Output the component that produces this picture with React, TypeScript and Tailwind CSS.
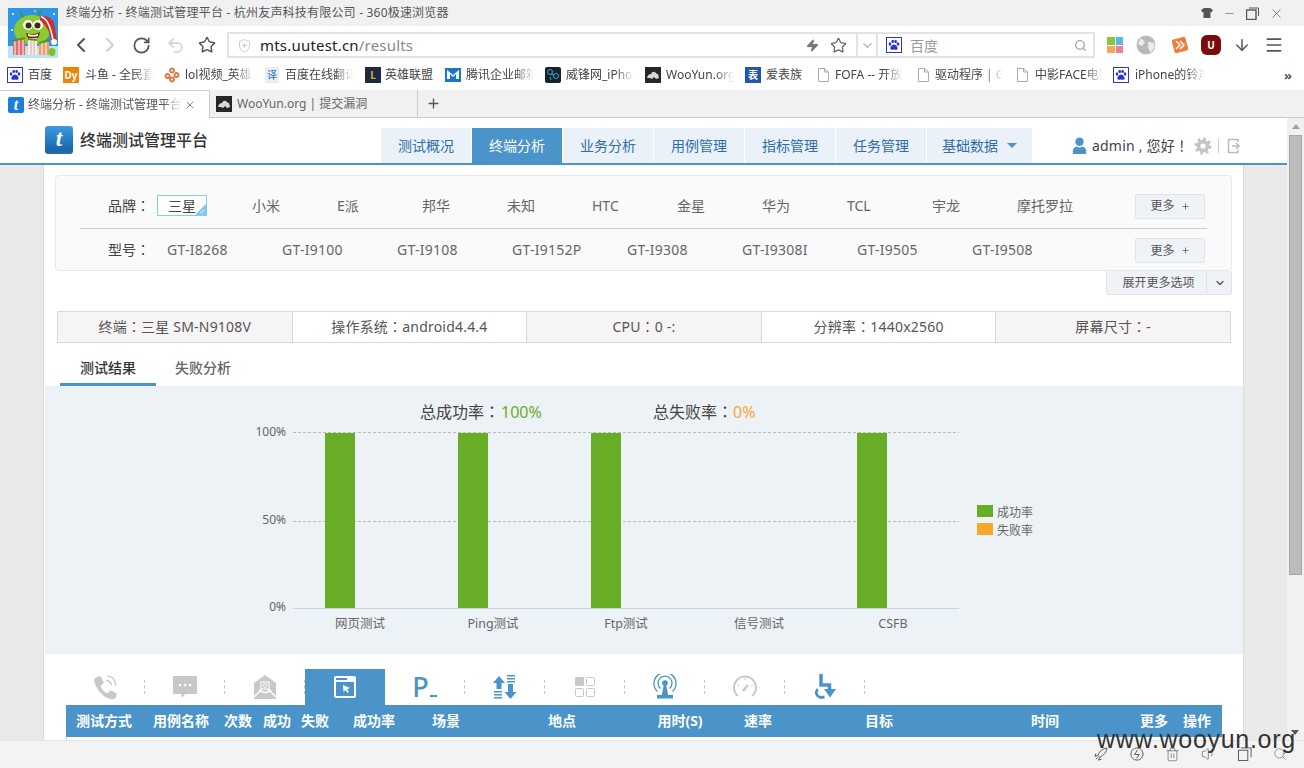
import type { ReactNode } from 'react'
import {
  ArrowDown,
  ChevronDown,
  ChevronLeft,
  ChevronRight,
  Menu,
  Minus,
  Plus,
  RotateCw,
  Search,
  ShieldPlus,
  Star,
  Trash2,
  Undo2,
  Volume1,
  X,
  Zap,
} from 'lucide-react'

const BLUE = '#4a94c9'

function Monster() {
  return (
    <svg viewBox="0 0 50 50" className="absolute left-[8px] top-[8px] h-[50px] w-[50px]">
      <rect width="50" height="50" fill="#2f95e6" />
      <rect y="38" width="50" height="12" fill="#bfe3f6" />
      <circle cx="5" cy="6" r="1" fill="#fff" />
      <circle cx="46" cy="6" r="1" fill="#fff" />
      <circle cx="4" cy="22" r="1" fill="#fff" />
      <circle cx="27" cy="3" r="0.800" fill="#fff" />
      <path d="M12 3l3 6M33 2l-3 6" stroke="#4f8f1c" strokeWidth="1.600" />
      <ellipse cx="24" cy="22" rx="18" ry="15" fill="#8ccb2e" />
      <path d="M32 9q10-3 14 6l3 17-6 1q-1-13-11-20z" fill="#d92b27" />
      <path d="M33 9q8 1 12 23" stroke="#fff" strokeWidth="1.600" fill="none" />
      <circle cx="46" cy="34" r="3" fill="#fff" />
      <circle cx="20" cy="17" r="5" fill="#fff" />
      <circle cx="30" cy="17" r="5" fill="#fff" />
      <circle cx="20.500" cy="17.500" r="3" fill="#3b2a1b" />
      <circle cx="29.500" cy="17.500" r="3" fill="#3b2a1b" />
      <path d="M18 25q7 3 14-1-1 8-7 8t-7-7z" fill="#7a2a1a" />
      <path d="M20 26q5 2 10 0v2q-5 1-10 0z" fill="#fff" />
      <rect x="5" y="32" width="12" height="15" fill="#e96a6a" />
      <path d="M7 32v15M11 32v15M15 32v15" stroke="#fbe3e3" strokeWidth="1.200" />
      <rect x="20" y="30" width="9" height="17" fill="#f3efe4" />
      <path d="M23 30v17M26 30v17" stroke="#e7a79f" strokeWidth="1" />
      <rect x="31" y="34" width="10" height="13" fill="#e9a06f" />
      <path d="M34 34v13M38 34v13" stroke="#fbe3d0" strokeWidth="1.200" />
      <path d="M4 33l13-3M20 31l9 1M31 35l11-3" stroke="#5b8f2c" strokeWidth="2" />
      <ellipse cx="44" cy="44" rx="3.500" ry="4" fill="#7cc02a" />
    </svg>
  )
}

function Paw({ className = 'h-[16px] w-[16px]' }: { className?: string }) {
  return (
    <svg viewBox="0 0 16 16" className={className}>
      <rect x="0.500" y="0.500" width="15" height="15" fill="#fff" stroke="#2a32d8" />
      <g fill="#2a32d8">
        <ellipse cx="4" cy="7" rx="1.300" ry="1.700" />
        <ellipse cx="6.700" cy="4.400" rx="1.300" ry="1.700" />
        <ellipse cx="9.600" cy="4.400" rx="1.300" ry="1.700" />
        <ellipse cx="12" cy="7" rx="1.300" ry="1.700" />
        <path d="M8 7.500c2 0 4.300 3 3.500 4.500-.7 1.200-2.300.4-3.500.4s-2.800.8-3.500-.4C3.700 10.500 6 7.500 8 7.500z" />
      </g>
    </svg>
  )
}

function DocIcon() {
  return (
    <svg viewBox="0 0 13 16" className="h-[16px] w-[13px]">
      <path d="M1.500 1.500h6l4 3.500v9.500h-10z M7.500 1.500v3.500h4" fill="#fff" stroke="#aaa" />
    </svg>
  )
}

function Square({ bg, children }: { bg: string; children: ReactNode }) {
  return (
    <span
      className="flex h-[16px] w-[16px] items-center justify-center text-[10px] font-bold leading-none text-white"
      style={{ backgroundColor: bg }}
    >
      {children}
    </span>
  )
}

function LolIcon() {
  return (
    <svg viewBox="0 0 16 16" className="h-[16px] w-[16px]">
      <g fill="none" stroke="#e2743c" strokeWidth="1.800">
        <circle cx="8" cy="3.500" r="2" />
        <circle cx="3.500" cy="9" r="2" />
        <circle cx="12.500" cy="8" r="2" />
        <circle cx="8" cy="12.500" r="2" />
      </g>
    </svg>
  )
}

function MailIcon() {
  return (
    <svg viewBox="0 0 16 16" className="h-[16px] w-[16px]">
      <rect width="16" height="14" y="1" fill="#1b78c8" />
      <path d="M2 3l6 5 6-5v9h-3V7L8 10 5 7v5H2z" fill="#fff" />
    </svg>
  )
}

function WeiIcon() {
  return (
    <svg viewBox="0 0 16 16" className="h-[16px] w-[16px]">
      <rect width="16" height="16" rx="2" fill="#16232b" />
      <circle cx="5" cy="5" r="2.500" fill="none" stroke="#30a7e0" />
      <circle cx="11" cy="9" r="2.500" fill="none" stroke="#30a7e0" />
      <path d="M6 7l3 1M5 10l1 3" stroke="#30a7e0" />
    </svg>
  )
}

function WooIcon() {
  return (
    <svg viewBox="0 0 16 16" className="h-[16px] w-[16px]">
      <rect width="16" height="16" fill="#26262a" />
      <path d="M2 11q1-4 4-4 1-3 4-2 1 2 3 2l1 4-3 1-2-2-2 2-2-1z" fill="#d8d8d8" />
    </svg>
  )
}

const bookmarks = [
  { icon: <Paw />, label: '百度', w: 'w-[56px]', slot: 'w-[21px]', tw: 'w-[28px]', fade: false },
  { icon: <Square bg="#f08300">Dy</Square>, label: '斗鱼 - 全民直播', w: 'w-[101px]', slot: 'w-[22px]', tw: 'w-[68px]', fade: true },
  { icon: <LolIcon />, label: 'lol视频_英雄联盟', w: 'w-[101px]', slot: 'w-[21px]', tw: 'w-[68px]', fade: true },
  { icon: <span className="flex h-[16px] w-[14px] items-center justify-center bg-[#e8eef5] text-[10px] leading-none text-[#2a6fb5]">译</span>, label: '百度在线翻译', w: 'w-[100px]', slot: 'w-[20px]', tw: 'w-[68px]', fade: true },
  { icon: <Square bg="#1d2a3f"><span className="text-[#d9a93f]">L</span></Square>, label: '英雄联盟', w: 'w-[80px]', slot: 'w-[20px]', tw: 'w-[56px]', fade: false },
  { icon: <MailIcon />, label: '腾讯企业邮箱', w: 'w-[100px]', slot: 'w-[21px]', tw: 'w-[68px]', fade: true },
  { icon: <WeiIcon />, label: '威锋网_iPhone', w: 'w-[100px]', slot: 'w-[21px]', tw: 'w-[68px]', fade: true },
  { icon: <WooIcon />, label: 'WooYun.org', w: 'w-[100px]', slot: 'w-[21px]', tw: 'w-[68px]', fade: true },
  { icon: <Square bg="#1e56b0">表</Square>, label: '爱表族', w: 'w-[72px]', slot: 'w-[21px]', tw: 'w-[42px]', fade: false },
  { icon: <DocIcon />, label: 'FOFA -- 开放平台', w: 'w-[100px]', slot: 'w-[18px]', tw: 'w-[68px]', fade: true },
  { icon: <DocIcon />, label: '驱动程序 | Github', w: 'w-[99px]', slot: 'w-[18px]', tw: 'w-[68px]', fade: true },
  { icon: <DocIcon />, label: '中影FACE电影', w: 'w-[97px]', slot: 'w-[19px]', tw: 'w-[68px]', fade: true },
  { icon: <Paw />, label: 'iPhone的铃声', w: 'w-[150px]', slot: 'w-[22px]', tw: 'w-[70px]', fade: true },
]

function TitleBar() {
  return (
    <div className="flex h-[26px] shrink-0 items-center justify-between bg-[#f1f1f1] pl-[66px] pr-[20px] text-[12px] tracking-[0.2px] text-[#555]">
      <span>终端分析 - 终端测试管理平台 - 杭州友声科技有限公司 - 360极速浏览器</span>
      <div className="flex items-center gap-[10px] text-[#666]">
        <svg viewBox="0 0 12 12" className="h-[12px] w-[12px]">
          <path d="M3 1h6l3 2-1.500 2.500L9.500 5v6h-7V5l-1 .5L0 3z" fill="#555" />
        </svg>
        <Minus size={13} strokeWidth={1.200} />
        <svg viewBox="0 0 13 13" className="h-[13px] w-[13px]" fill="none" stroke="#555">
          <rect x="0.500" y="3" width="9.500" height="9.500" strokeWidth="1.400" />
          <path d="M3 1h9.500v8" />
        </svg>
        <X size={15} strokeWidth={1.200} />
      </div>
    </div>
  )
}

function Toolbar() {
  return (
    <div className="flex h-[34px] shrink-0 items-center bg-white pl-[69px] pt-[4px] text-[#555]">
      <ChevronLeft size={24} strokeWidth={2} className="shrink-0" />
      <ChevronRight size={24} strokeWidth={2} className="ml-[5px] shrink-0 text-[#d0d0d0]" />
      <RotateCw size={19} strokeWidth={2.200} className="ml-[10px] shrink-0" />
      <Undo2 size={19} strokeWidth={2} className="ml-[15px] shrink-0 text-[#d4d4d4]" />
      <Star size={18} strokeWidth={2} className="ml-[13px] shrink-0" />
      <div className="ml-[11px] flex h-[26px] w-[868px] shrink-0 items-center border-2 border-[#e3e3e3]">
        <ShieldPlus size={15} strokeWidth={1.200} className="ml-[8px] shrink-0 text-[#bbb]" />
        <span className="ml-[8px] flex-1 whitespace-nowrap text-[15px] leading-none tracking-[0.2px] text-[#222]">
          mts.uutest.cn<span className="text-[#888]">/results</span>
        </span>
        <Zap size={13} className="shrink-0 text-[#777]" fill="#777" />
        <Star size={17} strokeWidth={1.800} className="ml-[11px] shrink-0 text-[#666]" />
        <div className="ml-[9px] flex h-full w-[22px] shrink-0 items-center justify-center border-x-2 border-[#e3e3e3]">
          <ChevronDown size={15} className="text-[#aaa]" />
        </div>
        <Paw className="ml-[8px] h-[16px] w-[16px] shrink-0" />
        <span className="ml-[8px] w-[164px] shrink-0 whitespace-nowrap text-[14px] text-[#999]">百度</span>
        <Search size={13} strokeWidth={2.500} className="shrink-0 text-[#aaa]" />
        <span className="w-[6px] shrink-0" />
      </div>
      <div className="ml-[12px] grid h-[16px] w-[16px] shrink-0 grid-cols-2 gap-[1px]">
        <span className="bg-[#8ac53f]" />
        <span className="bg-[#5ab4ef]" />
        <span className="bg-[#f5a65b]" />
        <span className="bg-[#f27f8a]" />
      </div>
      <svg viewBox="0 0 18 18" className="ml-[13px] h-[20px] w-[20px] shrink-0">
        <circle cx="9" cy="9" r="8.500" fill="#b9b9b9" />
        <path d="M4 3q3 1 4 4l-3 3-3-2zM11 6l5 1 1 4-4 5-2-4z" fill="#ececec" />
      </svg>
      <svg viewBox="0 0 18 18" className="ml-[15px] h-[18px] w-[18px] shrink-0">
        <rect x="2" y="2" width="14" height="14" rx="2" fill="#f47a3c" transform="rotate(-15 9 9)" />
        <path d="M5 5l4 4-4 4M9 5l4 4-4 4" stroke="#fff" strokeWidth="1.500" fill="none" />
      </svg>
      <span className="ml-[12px] flex h-[20px] w-[20px] shrink-0 items-center justify-center rounded-[6px] bg-[#7c0a0a] text-[10px] font-bold text-white">U</span>
      <ArrowDown size={18} strokeWidth={2} className="ml-[12px] shrink-0" />
      <Menu size={20} strokeWidth={2} className="ml-[13px] shrink-0" />
    </div>
  )
}

function BookmarkBar() {
  return (
    <div className="relative flex h-[30px] shrink-0 items-center bg-white pl-[7px] text-[12px] text-[#444]">
      {bookmarks.map((b) => (
        <div key={b.label} className={`flex shrink-0 items-center ${b.w}`}>
          <span className={`flex shrink-0 ${b.slot}`}>{b.icon}</span>
          <span
            className={`overflow-hidden whitespace-nowrap ${b.tw} ${
              b.fade ? '[mask-image:linear-gradient(to_right,black_72%,transparent)]' : ''
            }`}
          >
            {b.label}
          </span>
        </div>
      ))}
      <span className="absolute left-[1284px] top-[6px] text-[13px] font-bold text-[#555]">»</span>
    </div>
  )
}

function LogoT({ size = 'small' }: { size?: 'small' | 'large' }) {
  if (size === 'large') {
    return (
      <span className="flex h-[28px] w-[28px] items-center justify-center rounded-[3px] border-b-[3px] border-[#2b6a9f] bg-gradient-to-b from-[#3e9be0] to-[#1665ac] font-['Liberation_Serif',serif] text-[23px] font-bold italic leading-none text-white">
        t
      </span>
    )
  }
  return (
    <span className="flex h-[16px] w-[16px] items-center justify-center rounded-[2px] bg-[#1a7fdb] font-['Liberation_Serif',serif] text-[16px] font-bold italic leading-none text-white">
      t
    </span>
  )
}

function TabStrip() {
  return (
    <div className="flex h-[28px] shrink-0 items-stretch border-b border-[#ccc] bg-[#f1f1f1] text-[12px] text-[#555]">
      <div className="z-10 mb-[-1px] flex w-[210px] items-center border-r border-t border-[#ccc] bg-white pl-[8px]">
        <LogoT />
        <span className="ml-[4px] w-[154px] overflow-hidden whitespace-nowrap [mask-image:linear-gradient(to_right,black_88%,transparent)]">
          终端分析 - 终端测试管理平台 - 杭州
        </span>
        <X size={12} className="ml-[2px] text-[#888]" />
      </div>
      <div className="flex w-[208px] items-center border-r border-[#ccc] pl-[6px]">
        <WooIcon />
        <span className="ml-[5px] text-[#666]">WooYun.org | 提交漏洞</span>
      </div>
      <div className="flex w-[30px] items-center justify-center">
        <Plus size={15} strokeWidth={2.200} className="text-[#555]" />
      </div>
    </div>
  )
}

const navItems = ['测试概况', '终端分析', '业务分析', '用例管理', '指标管理', '任务管理']

function Header() {
  return (
    <div className="flex h-[47px] shrink-0 items-end border-b-2 border-[#4a94c9] bg-white pl-[45px]">
      <div className="mb-[9px] flex w-[336px] items-center">
        <LogoT size="large" />
        <span className="ml-[7px] text-[16px] font-medium text-[#333]">终端测试管理平台</span>
      </div>
      <div className="flex h-[35px] gap-[1px] text-[14px]">
        {navItems.map((n) => (
          <div
            key={n}
            className={`flex w-[90px] items-center justify-center ${
              n === '终端分析' ? 'bg-[#4a94c9] text-white' : 'bg-[#eaf1f8] text-[#2f6ea8]'
            }`}
          >
            {n}
          </div>
        ))}
        <div className="flex w-[105px] items-center justify-center gap-[9px] bg-[#eaf1f8] text-[#2f6ea8]">
          基础数据
          <span className="h-0 w-0 border-x-[5px] border-t-[5px] border-x-transparent border-t-[#4a94c9]" />
        </div>
      </div>
      <div className="mb-[7px] ml-[40px] flex items-center text-[14px] tracking-[0.2px] text-[#444]">
        <svg viewBox="0 0 16 18" className="h-[17px] w-[15px]" fill={BLUE}>
          <circle cx="8" cy="5" r="4.500" />
          <path d="M1 18q-1-7 4-8 3 2 6 0 5 1 4 8z" />
        </svg>
        <span className="ml-[5px] whitespace-nowrap">
          admin , 您好<span className="font-['Noto_Sans_CJK_TC']">！</span>
        </span>
        <svg viewBox="0 0 24 24" className="ml-[5px] h-[18px] w-[18px]" fill="none" stroke="#c4c4c4">
          <circle cx="12" cy="12" r="6" strokeWidth="5" />
          <circle cx="12" cy="12" r="9.500" strokeWidth="4" strokeDasharray="3.500 3.960" />
        </svg>
        <span className="ml-[6px] h-[14px] w-px bg-[#ccc]" />
        <svg viewBox="0 0 14 16" className="ml-[8px] h-[16px] w-[14px]" fill="none" stroke="#bbb" strokeWidth="1.500">
          <path d="M11 4V1.500H1.500v13H11V12M5 8h7M9 5l3 3-3 3" />
        </svg>
      </div>
    </div>
  )
}

const brands = ['小米', 'E派', '邦华', '未知', 'HTC', '金星', '华为', 'TCL', '宇龙', '摩托罗拉']
const models = ['GT-I8268', 'GT-I9100', 'GT-I9108', 'GT-I9152P', 'GT-I9308', 'GT-I9308I', 'GT-I9505', 'GT-I9508']

function Colon() {
  return <span className="font-['Noto_Sans_CJK_TC']">：</span>
}

function MoreButton({ className }: { className: string }) {
  return (
    <button className={`flex h-[25px] w-[70px] shrink-0 items-center justify-center gap-[6px] rounded-[2px] border border-[#dfe4ea] bg-[#eff3f7] text-[12px] text-[#555] ${className}`}>
      更多 <Plus size={9} strokeWidth={2} />
    </button>
  )
}

function FilterCard() {
  return (
    <div className="mx-[11px] mt-[10px] h-[96px] rounded-[4px] border border-[#e8e8e8] bg-[#fafafa] pl-[24px] text-[14px] text-[#666]">
      <div className="flex h-[53px] w-[1127px] items-center border-b border-[#ccc] pt-[7px]">
        <span className="w-[77px] shrink-0 whitespace-nowrap pl-[28px] text-[#444]">品牌<Colon /></span>
        <div className="relative flex h-[21px] w-[50px] shrink-0 items-center justify-center border border-[#89cbee] bg-white text-[#444]">
          三星
          <span className="absolute bottom-0 right-0 h-0 w-0 border-b-[11px] border-l-[11px] border-b-[#7cc6ef] border-l-transparent" />
          <svg viewBox="0 0 7 6" className="absolute bottom-[1px] right-[1px] h-[5px] w-[6px]" fill="none" stroke="#fff">
            <path d="M1 3l2 2 3-4" />
          </svg>
        </div>
        <div className="ml-[45px] flex w-[883px] shrink-0">
          {brands.map((b) => (
            <span key={b} className="w-[85px] shrink-0">
              {b}
            </span>
          ))}
        </div>
        <MoreButton className="mt-[1px]" />
      </div>
      <div className="flex h-[40px] w-[1127px] items-center">
        <span className="w-[87px] shrink-0 whitespace-nowrap pl-[28px] text-[#444]">型号<Colon /></span>
        <div className="flex w-[968px] shrink-0 tracking-[0.25px]">
          {models.map((m) => (
            <span key={m} className="w-[115px] shrink-0">
              {m}
            </span>
          ))}
        </div>
        <MoreButton className="mt-[3px]" />
      </div>
    </div>
  )
}

function ExpandButton() {
  return (
    <div className="mr-[11px] flex justify-end">
      <div className="flex h-[24px] w-[126px] items-center rounded-b-[3px] border border-t-0 border-[#dfe4ea] bg-[#eff3f7] text-[12px] text-[#555]">
        <span className="w-[100px] border-r border-[#dfe4ea] pl-[4px] text-center leading-[23px]">展开更多选项</span>
        <ChevronDown size={12} strokeWidth={2.500} className="ml-[7px]" />
      </div>
    </div>
  )
}

const infoCells = [
  ['终端', '三星 SM-N9108V'],
  ['操作系统', 'android4.4.4'],
  ['CPU', '0 -:'],
  ['分辨率', '1440x2560'],
  ['屏幕尺寸', '-'],
]

function InfoTable() {
  return (
    <div className="mx-[13px] mt-[16px] flex h-[32px] w-[1174px] border border-[#d8d8d8] text-[14px] text-[#555]">
      {infoCells.map(([k, v], i) => (
        <div
          key={k}
          className={`flex flex-1 items-center justify-center border-r border-[#d8d8d8] pb-[2px] tracking-[0.2px] last:border-r-0 ${
            i % 2 === 0 ? 'bg-[#f6f4f4]' : 'bg-white'
          }`}
        >
          <span className="whitespace-nowrap">
            {k}
            <Colon />
            {v}
          </span>
        </div>
      ))}
    </div>
  )
}

function ResultTabs() {
  return (
    <div className="ml-[16px] mt-[7px] flex h-[36px] text-[14px] font-medium">
      <div className="flex w-[96px] items-center justify-center border-b-[3px] border-[#4a94c9] pt-[1px] text-[#333]">测试结果</div>
      <div className="ml-[19px] flex items-center pb-[2px] text-[#666]">失败分析</div>
    </div>
  )
}

const bars = [
  { x: 280, label: '网页测试', cx: 315, on: true },
  { x: 413, label: 'Ping测试', cx: 448, on: true },
  { x: 546, label: 'Ftp测试', cx: 581, on: true },
  { x: 679, label: '信号测试', cx: 714, on: false },
  { x: 812, label: 'CSFB', cx: 848, on: true },
]

function Chart() {
  // coordinates are relative to the panel, which starts at x=45 y=386
  return (
    <div className="ml-[1px] h-[268px] w-[1198px] bg-[#edf2f6]">
      <svg width="1198" height="268" className="block">
        <text x="375" y="32" fontSize="16" fill="#444">
          总成功率<tspan fontFamily="Noto Sans CJK TC">：</tspan>
        </text>
        <text x="456" y="32" fontSize="16" fill="#6aae27">100%</text>
        <text x="608" y="32" fontSize="16" fill="#444">
          总失败率<tspan fontFamily="Noto Sans CJK TC">：</tspan>
        </text>
        <text x="688" y="32" fontSize="16" fill="#f5a733">0%</text>
        <line x1="248" x2="914" y1="46.500" y2="46.500" stroke="#bbb" strokeDasharray="3 2" />
        <line x1="248" x2="914" y1="135.500" y2="135.500" stroke="#bbb" strokeDasharray="3 2" />
        <line x1="248" x2="914" y1="222.500" y2="222.500" stroke="#c9d3e0" />
        <text x="241" y="50" textAnchor="end" fontSize="12" fill="#666">100%</text>
        <text x="241" y="138" textAnchor="end" fontSize="12" fill="#666">50%</text>
        <text x="241" y="225" textAnchor="end" fontSize="12" fill="#666">0%</text>
        {bars.map((b) =>
          b.on ? <rect key={b.label} x={b.x} y="47" width="30" height="175" fill="#68ad26" /> : null,
        )}
        {bars.map((b) => (
          <text key={b.label} x={b.cx} y="242" textAnchor="middle" fontSize="12.500" fill="#666">
            {b.label}
          </text>
        ))}
        <rect x="932" y="119" width="16" height="12" fill="#68ad26" />
        <rect x="932" y="137" width="16" height="12" fill="#f9a72b" />
        <text x="952" y="131" fontSize="12" fill="#666">成功率</text>
        <text x="952" y="149" fontSize="12" fill="#666">失败率</text>
      </svg>
    </div>
  )
}

function FeatureIcon({ name }: { name: string }) {
  const gray = '#c8c8c8'
  switch (name) {
    case 'phone':
      return (
        <svg viewBox="0 0 24 24" className="h-[26px] w-[26px]">
          <path d="M4 3l4-1 3 6-3 3q2 5 6 7l3-3 6 3-1 4q-2 2-5 1Q11 22 6 15 2 9 2 6q0-2 2-3z" fill={gray} />
          <path d="M13 6q4 0 5 4.500M14 2q7 0 8 8.500" fill="none" stroke={gray} strokeWidth="1.300" />
        </svg>
      )
    case 'msg':
      return (
        <svg viewBox="0 0 26 24" className="h-[24px] w-[26px]">
          <path d="M1 1h24v18H13l-3 4-1-4H1z" fill={gray} />
          <circle cx="8" cy="10" r="1.300" fill="#fff" />
          <circle cx="13" cy="10" r="1.300" fill="#fff" />
          <circle cx="18" cy="10" r="1.300" fill="#fff" />
        </svg>
      )
    case 'mail':
      return (
        <svg viewBox="0 0 24 26" className="h-[26px] w-[24px]">
          <path d="M12 1l11 8v16H1V9z" fill={gray} />
          <path d="M1 23l8-8M23 23l-8-8M6 16q6 5 12 0" stroke="#fff" strokeWidth="1.500" fill="none" />
          <rect x="8" y="8" width="8" height="7" fill="none" stroke="#fff" />
          <circle cx="12" cy="11.500" r="1.800" fill="none" stroke="#fff" />
        </svg>
      )
    case 'web':
      return (
        <svg viewBox="0 0 22 22" className="h-[22px] w-[22px]">
          <rect width="22" height="22" rx="2" fill="#fff" />
          <rect x="2" y="6" width="18" height="14" fill="#4a94c9" />
          <rect x="2" y="2" width="11" height="2" fill="#4a94c9" />
          <path d="M9 9l7 3-3 1 2 3-1.500 1-2-3-2 2z" fill="#fff" />
        </svg>
      )
    case 'p':
      return (
        <span className="flex items-end font-['Noto_Sans',sans-serif] text-[27px] font-medium leading-[26px] text-[#4a94c9]">
          P<span className="mb-[3px] ml-[1px] h-[2px] w-[7px] bg-[#4a94c9]" />
        </span>
      )
    case 'arrows':
      return (
        <svg viewBox="0 0 24 24" className="h-[24px] w-[24px]" fill={BLUE}>
          <path d="M6 1l6 7H8.500v6h-5V8H0zM17.500 24l-6-7H15V9h5v8h3.500z" />
          <path d="M1 16h8v1.500H1zM1 19h8v1.500H1zM1 22h8v1.500H1zM14 0h8v1.500h-8zM14 3h8v1.500h-8zM14 6h8v1.500h-8z" />
        </svg>
      )
    case 'grid':
      return (
        <svg viewBox="0 0 20 20" className="h-[20px] w-[20px]">
          <rect x="0" y="0" width="9" height="9" rx="1" fill={gray} />
          <rect x="11.500" y=".5" width="8" height="8" rx="1" fill="none" stroke={gray} />
          <rect x=".5" y="11.500" width="8" height="8" rx="1" fill="none" stroke={gray} />
          <rect x="11.500" y="11.500" width="8" height="8" rx="1" fill="none" stroke={gray} />
        </svg>
      )
    case 'antenna':
      return (
        <svg viewBox="0 0 24 26" className="h-[26px] w-[24px]" fill="none" stroke={BLUE} strokeWidth="1.300">
          <circle cx="12" cy="9" r="2.800" fill={BLUE} stroke="none" />
          <path d="M7.500 14.500a7 7 0 1 1 9 0" />
          <path d="M4.500 17.500a11 11 0 1 1 15 0" />
          <path d="M10.800 11h2.400l2 10H20v3.500H4V21h4.800z" fill={BLUE} stroke="none" />
        </svg>
      )
    case 'gauge':
      return (
        <svg viewBox="0 0 24 24" className="h-[24px] w-[24px]" fill="none" stroke={gray} strokeWidth="2">
          <path d="M5 21a11 11 0 1 1 14 0" />
          <path d="M10 16l5-6" strokeWidth="2.500" />
          <path d="M12 3v2M4 10l2 1M20 10l-2 1" strokeWidth="1" />
        </svg>
      )
    default:
      return (
        <svg viewBox="0 0 24 26" className="h-[26px] w-[24px]" fill="none" stroke={BLUE} strokeWidth="3.500">
          <path d="M8 0v11h8.500v6" />
          <path d="M11 15h12l-6 8.500z" fill={BLUE} stroke="none" />
          <path d="M4.500 15q-3.500 6 3 8.500l4-.5" strokeWidth="2.800" />
        </svg>
      )
  }
}

const features = ['phone', 'msg', 'mail', 'web', 'p', 'arrows', 'grid', 'antenna', 'gauge', 'csfb']

function FeatureRow() {
  return (
    <div className="ml-[21px] mt-[15px] flex h-[36px] items-stretch">
      {features.map((f) =>
        f === 'web' ? (
          <div key={f} className="flex w-[80px] items-center justify-center bg-[#4a94c9]">
            <FeatureIcon name={f} />
          </div>
        ) : (
          <div key={f} className="flex w-[80px] items-center justify-center">
            <div className="flex flex-1 justify-center">
              <FeatureIcon name={f} />
            </div>
            <span className="h-[14px] border-r border-dashed border-[#c4c4c4]" />
          </div>
        ),
      )}
    </div>
  )
}

const columns = [
  { t: '测试方式', w: 'w-[76px]' },
  { t: '用例名称', w: 'w-[78px]' },
  { t: '次数', w: 'w-[36px]' },
  { t: '成功', w: 'w-[42px]' },
  { t: '失败', w: 'w-[34px]' },
  { t: '成功率', w: 'w-[84px]' },
  { t: '场景', w: 'w-[60px]' },
  { t: '地点', w: 'w-[172px]' },
  { t: '用时(S)', w: 'w-[64px]' },
  { t: '速率', w: 'w-[92px]' },
  { t: '目标', w: 'w-[150px]' },
  { t: '时间', w: 'w-[182px]' },
  { t: '更多', w: 'w-[36px]' },
  { t: '操作', w: 'w-[50px]' },
]

function ResultTable() {
  return (
    <div className="ml-[22px] w-[1156px]">
      <div className="flex h-[32px] items-center bg-[#4a94c9] pb-[2px] text-[14px] font-bold text-white">
        {columns.map((c) => (
          <span key={c.t} className={`shrink-0 whitespace-nowrap text-center ${c.w}`}>
            {c.t}
          </span>
        ))}
      </div>
      <div className="h-[3px] border-l border-[#ddd]" />
    </div>
  )
}

function Scrollbar() {
  return (
    <div className="relative h-full w-[17px] shrink-0 bg-[#f1f1f1]">
      <span className="absolute left-[5px] top-[6px] h-0 w-0 border-x-[4px] border-b-[5px] border-x-transparent border-b-[#a0a0a0]" />
      <div className="absolute left-[2px] top-[17px] h-[440px] w-[13px] border border-[#a8a8a8] bg-[#bcbcbc]" />
    </div>
  )
}

function StatusBar() {
  return (
    <div className="relative h-[28px] shrink-0 border-t border-[#e6e6e6] bg-[#f3f3f3]">
      <span className="absolute left-[1291px] top-[-11px] h-0 w-0 border-x-[4px] border-t-[5px] border-x-transparent border-t-[#555]" />
      <div className="absolute left-[1093px] top-[5px] flex items-center gap-[21px] text-[#555]">
        <svg viewBox="0 0 16 16" className="h-[15px] w-[15px]" fill="none" stroke="#555">
          <path d="M15 1q-7 1-10 8l2 2q7-3 8-10zM5 9l-3 1 1-3M7 11l-1 3 3-1M3 13l2-2" />
        </svg>
        <svg viewBox="0 0 16 16" className="h-[15px] w-[15px]" fill="none" stroke="#555">
          <circle cx="8.500" cy="7.500" r="6.500" />
          <path d="M9 3L6 8h5L8 12" />
        </svg>
        <Trash2 size={15} strokeWidth={1} />
        <Volume1 size={16} strokeWidth={1} />
        <svg viewBox="0 0 15 15" className="h-[14px] w-[14px]" fill="none" stroke="#555">
          <rect x="0.500" y="3.500" width="10" height="11" />
          <path d="M3 1h11v10" />
        </svg>
        <Search size={14} strokeWidth={1} />
      </div>
    </div>
  )
}

export default function App() {
  return (
    <div className="relative flex h-screen w-screen flex-col overflow-hidden bg-white font-['Noto_Sans','Noto_Sans_CJK_SC',sans-serif]">
      <TitleBar />
      <Toolbar />
      <BookmarkBar />
      <TabStrip />
      <div className="flex min-h-0 flex-1">
        <div className="flex min-w-0 flex-1 flex-col">
          <Header />
          <div className="flex min-h-0 flex-1 justify-center overflow-hidden bg-[#e9e9e7]">
            <main className="h-full w-[1201px] shrink-0 overflow-hidden border-x border-[#dcdcdc] bg-white">
              <FilterCard />
              <ExpandButton />
              <InfoTable />
              <ResultTabs />
              <Chart />
              <FeatureRow />
              <ResultTable />
            </main>
          </div>
        </div>
        <Scrollbar />
      </div>
      <StatusBar />
      <Monster />
      <span className="absolute left-[1097px] top-[724px] font-['Liberation_Sans',sans-serif] text-[25px] leading-[30px] tracking-[0.7px] text-[#333]">
        www.wooyun.org
      </span>
    </div>
  )
}
